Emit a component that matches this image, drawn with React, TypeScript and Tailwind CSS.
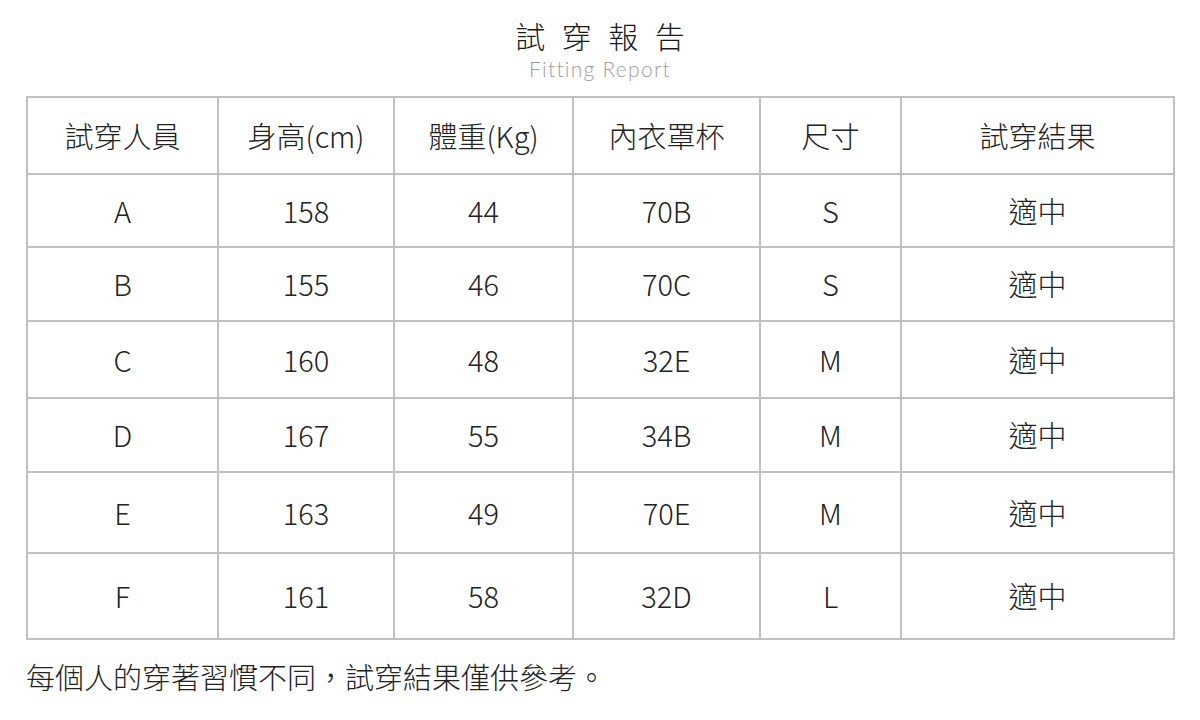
const font = { fontFamily: '"Noto Sans CJK TC", "Noto Sans", sans-serif' };

const headers = ['試穿人員', '身高(cm)', '體重(Kg)', '內衣罩杯', '尺寸', '試穿結果'];

const rows = [
  ['A', '158', '44', '70B', 'S', '適中'],
  ['B', '155', '46', '70C', 'S', '適中'],
  ['C', '160', '48', '32E', 'M', '適中'],
  ['D', '167', '55', '34B', 'M', '適中'],
  ['E', '163', '49', '70E', 'M', '適中'],
  ['F', '161', '58', '32D', 'L', '適中'],
];

const colWidths = ['w-[191px]', 'w-[176px]', 'w-[179px]', 'w-[187px]', 'w-[141px]', 'w-[273px]'];
const rowHeights = ['h-[73px]', 'h-[74px]', 'h-[77px]', 'h-[74px]', 'h-[81px]', 'h-[86px]'];

export default function App() {
  return (
    <div className="w-[1200px] h-[720px] bg-white text-[#222] overflow-hidden" style={font}>
      <header className="flex flex-col items-center pt-[15px]">
        <h1 className="text-[30px] font-light leading-[40px] tracking-[0.55em] pl-[0.55em] text-[#1a1a1a]">
          試穿報告
        </h1>
        <p className="text-[21px] font-light leading-[28px] text-[#a0a0a0] tracking-[0.06em]" style={{ fontFamily: 'Lato, "Noto Sans", sans-serif' }}>
          Fitting Report
        </p>
      </header>

      <table className="mt-[13px] ml-[26px] border-collapse table-fixed w-[1147px] font-light text-[29px] text-[#222]">
        <thead>
          <tr className="h-[77px]">
            {headers.map((h, i) => (
              <th key={h} className={`${colWidths[i]} border-2 border-[#c0c0c0] text-center font-light`}>
                {h}
              </th>
            ))}
          </tr>
        </thead>
        <tbody>
          {rows.map((r, ri) => (
            <tr key={r[0]} className={rowHeights[ri]}>
              {r.map((c, ci) => (
                <td key={ci} className="border-2 border-[#c0c0c0] text-center">
                  {c}
                </td>
              ))}
            </tr>
          ))}
        </tbody>
      </table>

      <p className="ml-[26px] mt-[16px] text-[29px] font-light leading-[40px] text-[#222]">
        每個人的穿著習慣不同，試穿結果僅供參考。
      </p>
    </div>
  );
}
